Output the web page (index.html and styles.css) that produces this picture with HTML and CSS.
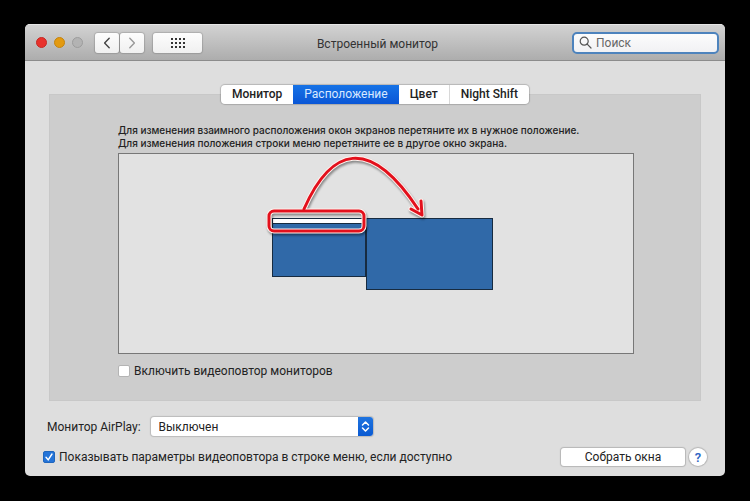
FILE: index.html
```
<!DOCTYPE html>
<html lang="ru">
<head>
  <meta charset="UTF-8">
  <meta name="viewport" content="width=device-width, initial-scale=1.0">
  <title>Встроенный монитор</title>
  <link rel="stylesheet" href="styles.css">
</head>
<body>
  <div class="window">
    <header class="titlebar">
      <div class="toolbar">
        <div class="lights">
          <span class="light close"></span>
          <span class="light minimize"></span>
          <span class="light disabled"></span>
        </div>
        <div class="nav">
          <button class="tool-btn" aria-label="Назад">
            <svg width="8" height="12" viewBox="0 0 8 12"><path d="M6.2 1.2 1.6 6l4.6 4.8"/></svg>
          </button>
          <button class="tool-btn forward" aria-label="Вперед">
            <svg width="8" height="12" viewBox="0 0 8 12"><path d="M1.8 1.2 6.4 6l-4.6 4.8"/></svg>
          </button>
        </div>
        <button class="tool-btn all" aria-label="Показать все">
          <svg width="14" height="10" viewBox="0 0 14 10"><path class="dots" d="M0 1h14M0 5h14M0 9h14"/></svg>
        </button>
      </div>
      <h1>Встроенный монитор</h1>
      <label class="search">
        <svg width="13" height="13" viewBox="0 0 13 13"><circle cx="5.2" cy="5.2" r="4"/><path d="m8.2 8.2 3.8 3.8"/></svg>
        <input type="text" placeholder="Поиск" aria-label="Поиск">
      </label>
    </header>

    <main>
      <nav class="tabs">
        <button>Монитор</button>
        <button class="active">Расположение</button>
        <button>Цвет</button>
        <button>Night Shift</button>
      </nav>

      <section class="panel">
        <p>Для изменения взаимного расположения окон экранов перетяните их в нужное положение.<br>
        Для изменения положения строки меню перетяните ее в другое окно экрана.</p>
        <div class="board">
          <div class="displays">
            <div class="display built-in"><div class="menu-bar"></div></div>
            <div class="display external"></div>
            <svg class="hint" width="170" height="90" viewBox="0 0 170 90">
              <g class="hint-halo">
                <rect x="8" y="63" width="95" height="20" rx="5"/>
                <path d="M43 61C70 0 108-13 157 61"/>
                <path d="m150 61 11 6-1-14"/>
              </g>
              <g class="hint-line">
                <rect x="8" y="63" width="95" height="20" rx="5"/>
                <path d="M43 61C70 0 108-13 157 61"/>
                <path d="m150 61 11 6-1-14"/>
              </g>
            </svg>
          </div>
        </div>
        <label class="check"><input type="checkbox">Включить видеоповтор мониторов</label>
      </section>

      <div class="airplay">
        <label for="airplay">Монитор AirPlay:</label>
        <div class="select">
          <select id="airplay"><option>Выключен</option></select>
          <svg width="15" height="19" viewBox="0 0 15 19"><path d="m4.5 8 3-3 3 3M4.5 11l3 3 3-3"/></svg>
        </div>
      </div>

      <footer>
        <label class="check"><input type="checkbox" checked>Показывать параметры видеоповтора в строке меню, если доступно</label>
        <button class="gather">Собрать окна</button>
        <button class="help" aria-label="Справка">?</button>
      </footer>
    </main>
  </div>
</body>
</html>
```

FILE: styles.css
```
* {
  box-sizing: border-box;
}
body {
  margin: 0;
  padding: 24px 25px 25px;
  background-color: #000;
  color: #222;
  font-family: Roboto, "Liberation Sans", sans-serif;
  font-size: 12px;
}
button, input, select {
  font: inherit;
  color: inherit;
}
svg {
  fill: none;
  stroke-linecap: round;
  stroke-linejoin: round;
}
.window {
  background-color: #dedede;
  border-radius: 5px;
  overflow: hidden;
}
.titlebar {
  display: grid;
  grid-template-columns: 1fr auto 1fr;
  align-items: center;
  height: 37px;
  padding: 0 6px 0 11px;
  background: linear-gradient(#d2d2d2, #adadad);
  border-top: 1px solid #e6e6e6;
  border-bottom: 1px solid #8c8c8c;
}
.titlebar h1 {
  margin: 0;
  padding-top: 3px;
  font-size: 12px;
  font-weight: 400;
  color: #333;
}
.toolbar, .lights, .nav {
  display: flex;
  align-items: center;
}
.lights {
  gap: 7px;
  margin-right: 12px;
}
.light {
  width: 11px;
  height: 11px;
  border-radius: 50%;
}
.close {
  background-color: #e8322c;
  border: 1px solid #c52823;
}
.minimize {
  background-color: #e39a10;
  border: 1px solid #c4840e;
}
.disabled {
  background-color: #b3b3b3;
  border: 1px solid #9c9c9c;
}
.nav {
  gap: 1px;
  margin-right: 9px;
}
.tool-btn {
  display: flex;
  align-items: center;
  justify-content: center;
  width: 24px;
  height: 20px;
  padding: 0;
  border: 0;
  border-radius: 3px;
  background: linear-gradient(#fdfdfd, #f0f0f0);
  box-shadow: 0 0 1px 1px rgba(0,0,0,0.14);
}
.tool-btn svg {
  stroke: #444;
  stroke-width: 1.4;
}
.forward svg {
  stroke: #999;
}
.all {
  width: 49px;
}
.tool-btn .dots {
  stroke: #333;
  stroke-width: 2;
  stroke-linecap: butt;
  stroke-dasharray: 2 2;
}
.search {
  display: flex;
  align-items: center;
  justify-self: end;
  gap: 4px;
  width: 147px;
  height: 22px;
  padding: 0 5px;
  border: 2px solid #4d83bd;
  border-radius: 5px;
  background: linear-gradient(#fcfcfc, #f1f1f4);
}
.search svg {
  flex: none;
  stroke: #555;
  stroke-width: 1.2;
}
.search input {
  width: 100%;
  padding: 0;
  border: 0;
  outline: 0;
  background: none;
}
.search input::placeholder {
  color: #666;
  opacity: 1;
}
main {
  padding: 24px 18px 10px;
}
.tabs {
  display: flex;
  position: relative;
  z-index: 1;
  width: fit-content;
  margin: 0 auto;
  border-radius: 4px;
  background-color: #fff;
  box-shadow: 0 0 1px 1px rgba(0,0,0,0.18);
  overflow: hidden;
}
.tabs button {
  height: 19px;
  padding: 0 11px;
  border: 0;
  background: none;
  font-weight: 500;
  line-height: 19px;
}
.tabs .active {
  background: linear-gradient(#1673e6, #0a56d6);
  color: #d9e9ff;
  font-weight: 400;
}
.tabs button:last-child {
  border-left: 1px solid #d8d8d8;
}
.panel {
  margin: -10px 6px 0;
  padding: 29px 66px 22px 68px;
  background-color: #cdcdcd;
  border: 1px solid #c8c8c8;
}
.panel p {
  margin: 0 0 3px;
  font-family: Inter, "Liberation Sans", sans-serif;
  font-size: 10px;
  font-weight: 500;
  line-height: 13px;
  white-space: nowrap;
}
.board {
  height: 201px;
  padding: 64px 0 0 12px;
  margin-bottom: 10px;
  background-color: #e2e2e2;
  border: 1px solid #777;
}
/* the two displays share an edge, the menu bar sits on the main one */
.displays {
  display: flex;
  align-items: flex-start;
  position: relative;
  width: 221px;
  margin: 0 auto;
}
.display {
  background-color: #3069a8;
  border: 1px solid #172b40;
}
.built-in {
  width: 94px;
  height: 59px;
}
.external {
  width: 127px;
  height: 72px;
}
.menu-bar {
  height: 5px;
  background-color: #fff;
  border-bottom: 1px solid #172b40;
}
.hint {
  position: absolute;
  left: -11px;
  top: -70px;
  filter: drop-shadow(1px 2px 1px rgba(0,0,0,0.4));
}
.hint-halo {
  stroke: #fff3ee;
  stroke-width: 5;
}
.hint-line {
  stroke: #e3101c;
  stroke-width: 3;
}
.check {
  display: flex;
  align-items: center;
  gap: 4px;
  height: 14px;
}
.check input {
  appearance: none;
  flex: none;
  width: 12px;
  height: 12px;
  margin: 0;
  border: 1px solid #b4b4b4;
  border-radius: 2px;
  background-color: #fff;
}
.check input:checked {
  border-color: #1f66bd;
  background: #2474d8 url("data:image/svg+xml,%3Csvg xmlns='http://www.w3.org/2000/svg' viewBox='0 0 10 10'%3E%3Cpath d='M2 5.3 4.2 7.8 8 2' fill='none' stroke='white' stroke-width='1.4' stroke-linecap='round'/%3E%3C/svg%3E");
}
.airplay {
  display: flex;
  align-items: center;
  gap: 10px;
  margin: 16px 4px 12px;
}
.select {
  position: relative;
  width: 222px;
  height: 19px;
}
.select select {
  appearance: none;
  width: 100%;
  height: 19px;
  padding: 0 20px 0 8px;
  border: 0;
  border-radius: 3px;
  background-color: #fff;
  box-shadow: 0 0 1px 1px rgba(0,0,0,0.16);
}
.select svg {
  position: absolute;
  top: 0;
  right: 0;
  border-radius: 0 3px 3px 0;
  background: linear-gradient(#1f74e0, #0a5ad2);
  stroke: #fff;
  stroke-width: 1.5;
  pointer-events: none;
}
footer {
  display: flex;
  align-items: center;
}
.gather {
  width: 124px;
  height: 18px;
  margin-left: auto;
  margin-right: 4px;
  padding: 0;
  border: 0;
  border-radius: 3px;
  background-color: #fff;
  box-shadow: 0 0 1px 1px rgba(0,0,0,0.18);
}
.help {
  width: 18px;
  height: 18px;
  padding: 0;
  border: 0;
  border-radius: 50%;
  background-color: #fff;
  box-shadow: 0 0 1px 1px rgba(0,0,0,0.18);
  color: #2f66c4;
  font-size: 13px;
  font-weight: 600;
}
```
